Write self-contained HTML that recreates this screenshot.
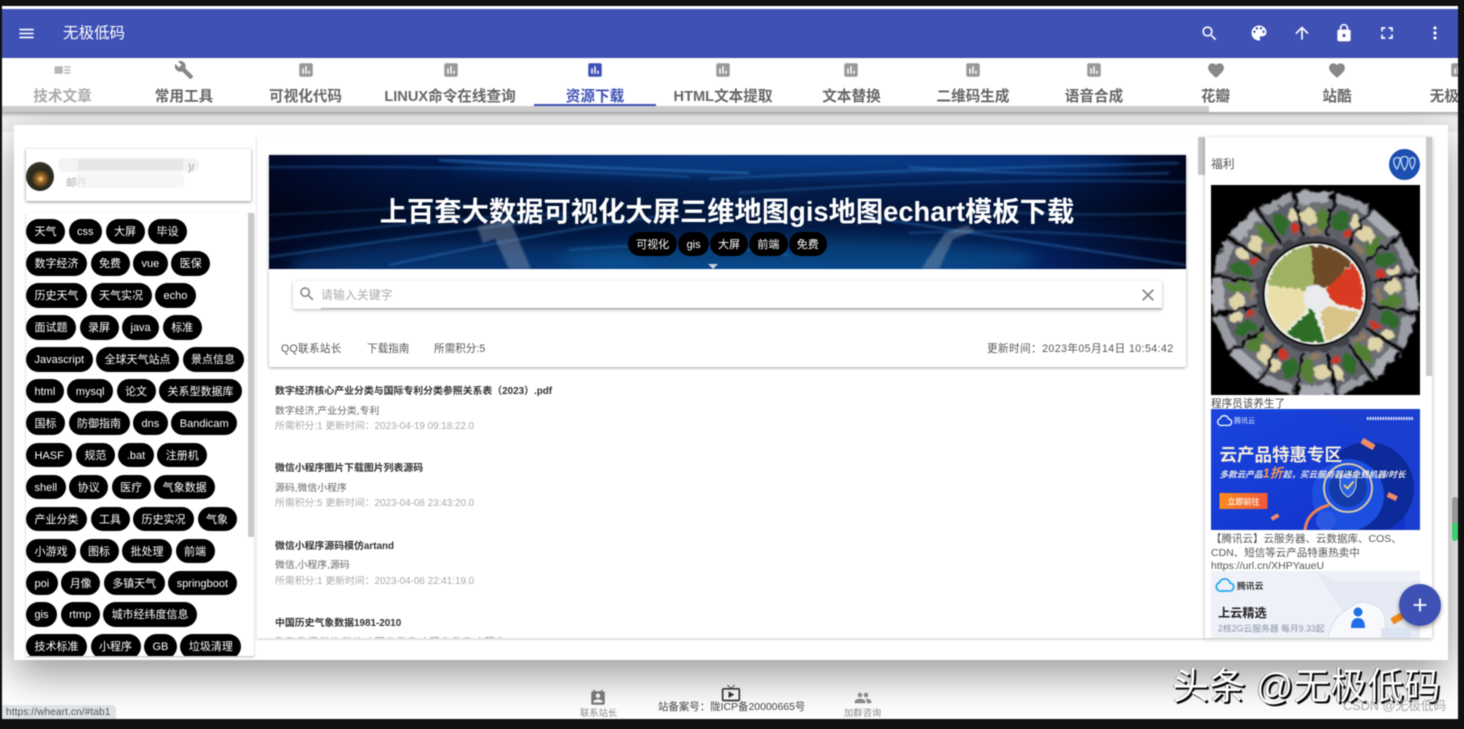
<!DOCTYPE html>
<html lang="zh"><head><meta charset="utf-8"><title>无极低码</title>
<style>
html,body{margin:0;padding:0;width:1464px;height:729px;overflow:hidden;background:#111}
*{box-sizing:border-box}
#root{position:absolute;left:0;top:0;width:1464px;height:729px;overflow:hidden;background:#fff;filter:blur(.45px);font-family:"Liberation Sans","Noto Sans CJK SC",sans-serif;color:#333}
.a{position:absolute;white-space:nowrap}
svg{display:block}
.hi{position:absolute;top:23px;width:20px;height:20px;fill:#fff}
.tab{position:absolute;top:88.5px;transform:translateX(-50%);font-size:14.6px;font-weight:bold;color:#666;line-height:17px;white-space:nowrap}
.ti{position:absolute;top:61px;width:18px;height:18px;fill:#999;transform:translateX(-50%)}
.row{position:absolute;left:26px;display:flex;gap:3.5px}
.c{height:24.4px;line-height:26px;border-radius:13px;background:#000;color:#fff;font-size:11px;padding:0 8.5px;white-space:nowrap;display:block}
.t1{position:absolute;left:275px;font-size:9.9px;font-weight:bold;color:#333;white-space:nowrap;line-height:14px}
.t2{position:absolute;left:275px;font-size:9.9px;color:#666;white-space:nowrap;line-height:13px}
.t3{position:absolute;left:275px;font-size:9.85px;color:#aaa;white-space:nowrap;line-height:13px}
.info{position:absolute;top:342px;font-size:10.6px;color:#555;white-space:nowrap;line-height:14px}
</style></head><body>
<div id="root">

<!-- page shade -->
<div class="a" style="left:0;top:112px;width:1464px;height:20px;background:#f2f2f2"></div>

<!-- large card -->
<div class="a" style="left:14px;top:125px;width:1434px;height:535px;background:#fff;box-shadow:0 14px 40px rgba(0,0,0,.42)"></div>

<!-- header -->
<div class="a" style="left:0;top:9px;width:1464px;height:48.5px;background:#3f51b5"></div>
<svg class="hi" style="left:16.500px;top:23.500px;width:19px;height:19px" viewBox="0 0 24 24"><path d="M3 18h18v-2H3v2zm0-5h18v-2H3v2zm0-7v2h18V6H3z"/></svg>
<div class="a" style="left:63px;top:24px;font-size:15.5px;line-height:19px;color:#fff">无极低码</div>
<svg class="hi" style="left:1199.500px;top:23.500px;width:19px;height:19px" viewBox="0 0 24 24"><path d="M15.500 14h-.79l-.28-.27C15.410 12.590 16 11.110 16 9.500 16 5.910 13.090 3 9.500 3S3 5.910 3 9.500 5.910 16 9.500 16c1.610 0 3.090-.59 4.230-1.570l.27.28v.79l5 4.990L20.490 19l-4.990-5zm-6 0C7.010 14 5 11.990 5 9.500S7.010 5 9.500 5 14 7.010 14 9.500 11.990 14 9.500 14z"/></svg>
<svg class="hi" style="left:1249px" viewBox="0 0 24 24"><path d="M12 3c-4.970 0-9 4.030-9 9s4.030 9 9 9c.83 0 1.500-.67 1.500-1.500 0-.39-.15-.74-.39-1.010-.23-.26-.38-.61-.38-.99 0-.83.67-1.500 1.500-1.500H16c2.760 0 5-2.240 5-5 0-4.420-4.030-8-9-8zm-5.500 9c-.83 0-1.500-.67-1.500-1.500S5.670 9 6.500 9 8 9.670 8 10.500 7.330 12 6.500 12zm3-4C8.670 8 8 7.330 8 6.500S8.670 5 9.500 5s1.500.67 1.500 1.500S10.330 8 9.500 8zm5 0c-.83 0-1.500-.67-1.500-1.500S13.670 5 14.500 5s1.500.67 1.500 1.500S15.330 8 14.500 8zm3 4c-.83 0-1.500-.67-1.500-1.500S16.670 9 17.500 9s1.500.67 1.500 1.500-.67 1.500-1.500 1.500z"/></svg>
<svg class="hi" style="left:1292px" viewBox="0 0 24 24"><path d="M4 12l1.410 1.410L11 7.830V20h2V7.830l5.580 5.590L20 12l-8-8-8 8z"/></svg>
<svg class="hi" style="left:1334px" viewBox="0 0 24 24"><path d="M18 8h-1V6c0-2.760-2.240-5-5-5S7 3.240 7 6v2H6c-1.100 0-2 .9-2 2v10c0 1.100.9 2 2 2h12c1.100 0 2-.9 2-2V10c0-1.100-.9-2-2-2zm-6 9c-1.100 0-2-.9-2-2s.9-2 2-2 2 .9 2 2-.9 2-2 2zm3.100-9H8.900V6c0-1.710 1.390-3.100 3.100-3.100 1.710 0 3.100 1.390 3.100 3.100v2z"/></svg>
<svg class="hi" style="left:1377px" viewBox="0 0 24 24"><path d="M7 14H5v5h5v-2H7v-3zm-2-4h2V7h3V5H5v5zm12 7h-3v2h5v-5h-2v3zM14 5v2h3v3h2V5h-5z"/></svg>
<svg class="hi" style="left:1425px" viewBox="0 0 24 24"><path d="M12 8c1.100 0 2-.9 2-2s-.9-2-2-2-2 .9-2 2 .9 2 2 2zm0 2c-1.100 0-2 .9-2 2s.9 2 2 2 2-.9 2-2-.9-2-2-2zm0 6c-1.100 0-2 .9-2 2s.9 2 2 2 2-.9 2-2-.9-2-2-2z"/></svg>

<!-- tabs -->
<div class="a" style="left:0;top:58px;width:1464px;height:54px;background:#fff;box-shadow:0 2px 4px rgba(0,0,0,.35)"></div>
<div class="a" style="left:0;top:106px;width:1209px;height:6px;background:#cbcbcb"></div>

<svg class="ti" style="left:62px;fill:#b5b5b5" viewBox="0 0 24 24"><path d="M2 7h11v10H2zM15 7h8v2h-8zM15 11h8v2h-8zM15 15h8v2h-8z"/></svg>
<svg class="ti" style="left:184px;width:20px;height:20px;top:60px;fill:#888" viewBox="0 0 24 24"><path d="M22.700 19l-9.100-9.100c.9-2.300.4-5-1.500-6.900-2-2-5-2.400-7.400-1.300L9 6 6 9 1.600 4.700C.4 7.100.9 10.100 2.900 12.100c1.900 1.900 4.600 2.400 6.900 1.500l9.100 9.100c.4.4 1 .4 1.400 0l2.300-2.300c.5-.4.5-1.100.1-1.400z"/></svg>
<svg class="ti" style="left:305.500px" viewBox="0 0 24 24"><path d="M19 3H5c-1.100 0-2 .9-2 2v14c0 1.100.9 2 2 2h14c1.100 0 2-.9 2-2V5c0-1.100-.9-2-2-2zM9 17H7v-7h2v7zm4 0h-2V7h2v10zm4 0h-2v-4h2v4z"/></svg>
<svg class="ti" style="left:450.500px" viewBox="0 0 24 24"><path d="M19 3H5c-1.100 0-2 .9-2 2v14c0 1.100.9 2 2 2h14c1.100 0 2-.9 2-2V5c0-1.100-.9-2-2-2zM9 17H7v-7h2v7zm4 0h-2V7h2v10zm4 0h-2v-4h2v4z"/></svg>
<svg class="ti" style="left:595px;fill:#3f51b5" viewBox="0 0 24 24"><path d="M19 3H5c-1.100 0-2 .9-2 2v14c0 1.100.9 2 2 2h14c1.100 0 2-.9 2-2V5c0-1.100-.9-2-2-2zM9 17H7v-7h2v7zm4 0h-2V7h2v10zm4 0h-2v-4h2v4z"/></svg>
<svg class="ti" style="left:723px" viewBox="0 0 24 24"><path d="M19 3H5c-1.100 0-2 .9-2 2v14c0 1.100.9 2 2 2h14c1.100 0 2-.9 2-2V5c0-1.100-.9-2-2-2zM9 17H7v-7h2v7zm4 0h-2V7h2v10zm4 0h-2v-4h2v4z"/></svg>
<svg class="ti" style="left:851px" viewBox="0 0 24 24"><path d="M19 3H5c-1.100 0-2 .9-2 2v14c0 1.100.9 2 2 2h14c1.100 0 2-.9 2-2V5c0-1.100-.9-2-2-2zM9 17H7v-7h2v7zm4 0h-2V7h2v10zm4 0h-2v-4h2v4z"/></svg>
<svg class="ti" style="left:973px" viewBox="0 0 24 24"><path d="M19 3H5c-1.100 0-2 .9-2 2v14c0 1.100.9 2 2 2h14c1.100 0 2-.9 2-2V5c0-1.100-.9-2-2-2zM9 17H7v-7h2v7zm4 0h-2V7h2v10zm4 0h-2v-4h2v4z"/></svg>
<svg class="ti" style="left:1094px" viewBox="0 0 24 24"><path d="M19 3H5c-1.100 0-2 .9-2 2v14c0 1.100.9 2 2 2h14c1.100 0 2-.9 2-2V5c0-1.100-.9-2-2-2zM9 17H7v-7h2v7zm4 0h-2V7h2v10zm4 0h-2v-4h2v4z"/></svg>
<svg class="ti" style="left:1215.500px;width:19px;height:19px;fill:#888" viewBox="0 0 24 24"><path d="M12 21.350l-1.450-1.320C5.400 15.360 2 12.280 2 8.500 2 5.420 4.420 3 7.500 3c1.740 0 3.410.81 4.500 2.090C13.090 3.810 14.760 3 16.500 3 19.580 3 22 5.420 22 8.500c0 3.780-3.400 6.860-8.550 11.540L12 21.350z"/></svg>
<svg class="ti" style="left:1337px;width:19px;height:19px;fill:#888" viewBox="0 0 24 24"><path d="M12 21.350l-1.450-1.320C5.400 15.360 2 12.280 2 8.500 2 5.420 4.420 3 7.500 3c1.740 0 3.410.81 4.500 2.090C13.090 3.810 14.760 3 16.500 3 19.580 3 22 5.420 22 8.500c0 3.780-3.400 6.860-8.550 11.540L12 21.350z"/></svg>
<svg class="ti" style="left:1458px" viewBox="0 0 24 24"><path d="M19 3H5c-1.100 0-2 .9-2 2v14c0 1.100.9 2 2 2h14c1.100 0 2-.9 2-2V5c0-1.100-.9-2-2-2zM9 17H7v-7h2v7zm4 0h-2V7h2v10zm4 0h-2v-4h2v4z"/></svg>

<div class="tab" style="left:62.500px;color:#aaa">技术文章</div>
<div class="tab" style="left:184px">常用工具</div>
<div class="tab" style="left:305.500px">可视化代码</div>
<div class="tab" style="left:450px">LINUX命令在线查询</div>
<div class="tab" style="left:595px;color:#3f51b5">资源下载</div>
<div class="tab" style="left:723px">HTML文本提取</div>
<div class="tab" style="left:851.500px">文本替换</div>
<div class="tab" style="left:973px">二维码生成</div>
<div class="tab" style="left:1094px">语音合成</div>
<div class="tab" style="left:1215.500px">花瓣</div>
<div class="tab" style="left:1337px">站酷</div>
<div class="tab" style="left:1459px">无极低码</div>
<div class="a" style="left:534px;top:104px;width:122px;height:2px;background:#3f51b5"></div>

<!-- user card -->
<div class="a" style="left:26px;top:149px;width:225px;height:52px;background:#fff;box-shadow:0 1px 3px rgba(0,0,0,.45)"></div>
<div class="a" style="left:26px;top:162px;width:28px;height:29px;border-radius:50%;background:radial-gradient(circle at 52% 58%,#f0d898 0,#a86a28 16%,#2a281a 42%,#3c3a2a 82%,#8a8a80 100%)"></div>
<div class="a" style="left:66px;top:176px;font-size:10.5px;color:#aaa;line-height:14px">邮件</div>
<div class="a" style="left:58px;top:158px;width:141px;height:14px;background:#f3f3f3;border-radius:6px"></div>
<div class="a" style="left:78px;top:159px;width:105px;height:11px;background:#e6e6e6"></div>
<div class="a" style="left:76px;top:173px;width:108px;height:15px;background:rgba(242,242,242,.72);border-radius:4px"></div>
<div class="a" style="left:188px;top:163px;font-size:10px;color:#999;line-height:12px">)/</div>

<!-- tags panel -->
<div class="a" style="left:26px;top:213px;width:228px;height:443px;background:#fff;box-shadow:0 1px 2px rgba(0,0,0,.3);overflow:hidden"></div>
<div class="a" style="left:248px;top:213px;width:6px;height:324px;background:#c9c9c9"></div>
<div class="a" style="left:0;top:0;width:254px;height:656px;overflow:hidden">
<div class="row" style="top:219.300px"><span class="c">天气</span><span class="c">css</span><span class="c">大屏</span><span class="c">毕设</span></div>
<div class="row" style="top:251.300px"><span class="c">数字经济</span><span class="c">免费</span><span class="c">vue</span><span class="c">医保</span></div>
<div class="row" style="top:283.200px"><span class="c">历史天气</span><span class="c">天气实况</span><span class="c">echo</span></div>
<div class="row" style="top:315.200px"><span class="c">面试题</span><span class="c">录屏</span><span class="c">java</span><span class="c">标准</span></div>
<div class="row" style="top:347.200px"><span class="c">Javascript</span><span class="c">全球天气站点</span><span class="c">景点信息</span></div>
<div class="row" style="top:379.100px"><span class="c">html</span><span class="c">mysql</span><span class="c">论文</span><span class="c">关系型数据库</span></div>
<div class="row" style="top:411px"><span class="c">国标</span><span class="c">防御指南</span><span class="c">dns</span><span class="c">Bandicam</span></div>
<div class="row" style="top:442.800px"><span class="c">HASF</span><span class="c">规范</span><span class="c">.bat</span><span class="c">注册机</span></div>
<div class="row" style="top:474.800px"><span class="c">shell</span><span class="c">协议</span><span class="c">医疗</span><span class="c">气象数据</span></div>
<div class="row" style="top:506.700px"><span class="c">产业分类</span><span class="c">工具</span><span class="c">历史实况</span><span class="c">气象</span></div>
<div class="row" style="top:538.600px"><span class="c">小游戏</span><span class="c">图标</span><span class="c">批处理</span><span class="c">前端</span></div>
<div class="row" style="top:570.500px"><span class="c">poi</span><span class="c">月像</span><span class="c">多镇天气</span><span class="c">springboot</span></div>
<div class="row" style="top:602.400px"><span class="c">gis</span><span class="c">rtmp</span><span class="c">城市经纬度信息</span></div>
<div class="row" style="top:634.400px"><span class="c">技术标准</span><span class="c">小程序</span><span class="c">GB</span><span class="c">垃圾清理</span></div>
</div>

<!-- main panel -->
<div class="a" style="left:257px;top:137px;width:948px;height:501px;background:#fff;box-shadow:0 1px 2px rgba(0,0,0,.25)"></div>
<div class="a" style="left:269px;top:155px;width:917px;height:212px;background:#fff;box-shadow:0 1px 3px rgba(0,0,0,.35);border-radius:2px"></div>

<!-- banner -->
<svg class="a" style="left:269px;top:155px" width="917" height="114" viewBox="0 0 917 114">
<defs>
<linearGradient id="bg" x1="0" x2="1" y1="0" y2="0"><stop offset="0" stop-color="#010a2d"/><stop offset=".15" stop-color="#021a50"/><stop offset=".5" stop-color="#062c70"/><stop offset=".85" stop-color="#04246a"/><stop offset="1" stop-color="#000722"/></linearGradient>
<linearGradient id="vg" x1="0" x2="0" y1="0" y2="1"><stop offset="0" stop-color="#000" stop-opacity=".05"/><stop offset=".5" stop-color="#000" stop-opacity=".48"/><stop offset="1" stop-color="#000" stop-opacity=".05"/></linearGradient>
<filter id="b1" x="-5%" y="-20%" width="110%" height="140%"><feGaussianBlur stdDeviation="1"/></filter>
<filter id="b2" x="-5%" y="-20%" width="110%" height="140%"><feGaussianBlur stdDeviation="7"/></filter>
</defs>
<rect width="917" height="114" fill="url(#bg)"/>
<ellipse cx="200" cy="110" rx="180" ry="24" fill="#0c5aa8" opacity=".45" filter="url(#b2)"/>
<ellipse cx="530" cy="104" rx="240" ry="22" fill="#0f6fb8" opacity=".5" filter="url(#b2)"/>
<ellipse cx="520" cy="10" rx="340" ry="12" fill="#1056b4" opacity=".55" filter="url(#b2)"/>
<rect width="917" height="114" fill="url(#vg)"/>
<g fill="none" stroke="#3a8fdc" stroke-opacity=".65" filter="url(#b1)">
<path d="M0 12Q200 10 420 22" stroke-width="1"/><path d="M170 5Q300 12 480 18" stroke-width="1.800"/><path d="M440 24Q600 16 910 8" stroke-width="1.200"/><path d="M470 38Q700 22 917 27" stroke-width="1"/><path d="M640 12Q780 22 900 18" stroke-width="1.200"/>
<path d="M0 85Q180 62 300 58" stroke-width="1"/><path d="M0 102Q170 78 300 62" stroke-width="1.200"/><path d="M120 110Q280 76 400 60" stroke-width="1.300"/><path d="M600 62Q780 90 917 110" stroke-width="1.300"/><path d="M640 78Q780 72 917 88" stroke-width="1"/><path d="M700 55Q800 62 917 58" stroke-width="1"/><path d="M0 60Q100 55 200 50" stroke-width=".8"/><path d="M300 95Q420 84 520 100" stroke-width="1"/>
</g>
<g filter="url(#b1)" opacity=".38"><path d="M208 72L240 62L262 114H240L226 84L214 88Z" fill="#9aa6b8"/><path d="M652 114L676 78L698 70L706 76L684 84L670 114Z" fill="#9aa6b8"/></g>
<path d="M439 109h10l-5 5z" fill="#c8d2dc"/>
<text x="458" y="66" text-anchor="middle" font-family="Liberation Sans,Noto Sans CJK SC,sans-serif" font-size="27.300" font-weight="bold" fill="#fff">上百套大数据可视化大屏三维地图gis地图echart模板下载</text>
</svg>
<div class="a" style="left:628px;top:231.500px;display:flex;gap:1px">
<span class="c" style="padding:0 8.200px">可视化</span><span class="c" style="padding:0 8.200px">gis</span><span class="c" style="padding:0 8.200px">大屏</span><span class="c" style="padding:0 8.200px">前端</span><span class="c" style="padding:0 8.200px">免费</span>
</div>

<!-- search -->
<div class="a" style="left:293px;top:281px;width:869px;height:28px;background:#fff;box-shadow:0 1px 3px rgba(0,0,0,.3);border-radius:2px"></div>
<svg class="a" style="left:298px;top:285px;fill:#808080" width="18" height="18" viewBox="0 0 24 24"><path d="M15.500 14h-.79l-.28-.27C15.410 12.590 16 11.110 16 9.500 16 5.910 13.090 3 9.500 3S3 5.910 3 9.500 5.910 16 9.500 16c1.610 0 3.090-.59 4.230-1.570l.27.28v.79l5 4.990L20.490 19l-4.990-5zm-6 0C7.010 14 5 11.990 5 9.500S7.010 5 9.500 5 14 7.010 14 9.500 11.990 14 9.500 14z"/></svg>
<div class="a" style="left:321px;top:287px;font-size:11.8px;line-height:16px;color:#aaa;letter-spacing:.15px">请输入关键字</div>
<div class="a" style="left:321px;top:307.500px;width:841px;height:1px;background:#aaa"></div>
<svg class="a" style="left:1138px;top:285px;fill:#808080" width="20" height="20" viewBox="0 0 24 24"><path d="M19 6.410L17.590 5 12 10.590 6.410 5 5 6.410 10.590 12 5 17.590 6.410 19 12 13.410 17.590 19 19 17.590 13.410 12z"/></svg>

<div class="info" style="left:281px;letter-spacing:.3px">QQ联系站长</div>
<div class="info" style="left:367px">下载指南</div>
<div class="info" style="left:434px">所需积分:5</div>
<div class="info" style="left:987px;letter-spacing:.42px">更新时间：2023年05月14日 10:54:42</div>

<!-- list -->
<div class="t1" style="top:385px">数字经济核心产业分类与国际专利分类参照关系表（2023）.pdf</div>
<div class="t2" style="top:404.500px">数字经济,产业分类,专利</div>
<div class="t3" style="top:419.500px">所需积分:1 更新时间：2023-04-19 09:18:22.0</div>
<div class="t1" style="top:462.300px">微信小程序图片下载图片列表源码</div>
<div class="t2" style="top:482px">源码,微信小程序</div>
<div class="t3" style="top:497px">所需积分:5 更新时间：2023-04-08 23:43:20.0</div>
<div class="t1" style="top:539.800px">微信小程序源码模仿artand</div>
<div class="t2" style="top:559px">微信,小程序,源码</div>
<div class="t3" style="top:574.500px">所需积分:1 更新时间：2023-04-06 22:41:19.0</div>
<div class="t1" style="top:616.800px">中国历史气象数据1981-2010</div>
<div class="a" style="left:275px;top:636.500px;width:240px;height:2px;overflow:hidden"><div style="font-size:9.9px;color:#777;line-height:13px;white-space:nowrap;margin-top:-1px">数字,数据,微信,微信,小程序,数字,小程序,数字,小程序</div></div>
<div class="a" style="left:257px;top:638px;width:948px;height:2px;background:#e4e4e4"></div>

<div class="a" style="left:1198px;top:137px;width:7px;height:38px;background:#c6c6c6"></div>

<!-- right panel -->
<div class="a" style="left:1205px;top:137px;width:227px;height:501px;background:#fff;box-shadow:0 1px 4px rgba(0,0,0,.3)"></div>
<div class="a" style="left:1426px;top:137px;width:6px;height:239px;background:#cacaca"></div>
<div class="a" style="left:1211px;top:156px;font-size:11.8px;line-height:16px;color:#555">福利</div>
<svg class="a" style="left:1389px;top:149px" width="31" height="31" viewBox="0 0 31 31">
<circle cx="15.500" cy="15.500" r="15.500" fill="#1d4fb0"/>
<g fill="none" stroke="#bcd7ef" stroke-width="1.300"><path d="M5 10c3-2 5-2 6 0 0 5-2 8-3 10-2-2-4-6-3-10z"/><path d="M12 9c2-2 5-2 7 0 0 6-2 10-3.500 12C14 19 12 15 12 9z"/><path d="M21 10c1-2 3-2 5 0 0 4-1 8-3 10-1-2-3-5-2-10z"/></g>
</svg>

<!-- food image -->
<svg class="a" style="left:1211px;top:185px" width="209" height="210" viewBox="0 0 209 210">
<defs>
<g id="sa">
<path d="M-20-102L18-104L10-56L-10-56Z" fill="#6d6e76"/>
<path d="M-18-101L16-103L14-92L-15-90Z" fill="#a9abb2"/>
<ellipse cx="-7" cy="-78" rx="8" ry="8" fill="#ded4a8"/>
<ellipse cx="7" cy="-76" rx="6" ry="12" fill="#527f36"/>
<ellipse cx="0" cy="-63" rx="7" ry="3" fill="#8f7a62"/>
</g>
<g id="sb">
<path d="M-20-102L18-104L10-56L-10-56Z" fill="#5f6068"/>
<path d="M-18-101L16-103L14-94L-15-92Z" fill="#9a9ca3"/>
<ellipse cx="-5" cy="-78" rx="7" ry="11" fill="#2f6a2b"/>
<ellipse cx="9" cy="-82" rx="5" ry="7" fill="#e0d6ac"/>
<ellipse cx="7" cy="-68" rx="4.500" ry="5" fill="#c93626"/>
</g>
<filter id="fb" x="-5%" y="-5%" width="110%" height="110%">
<feTurbulence type="fractalNoise" baseFrequency=".13" numOctaves="2" seed="4" result="n"/>
<feDisplacementMap in="SourceGraphic" in2="n" scale="9" result="d"/>
<feGaussianBlur in="d" stdDeviation=".7"/>
</filter>
<filter id="fp" x="-5%" y="-5%" width="110%" height="110%">
<feTurbulence type="fractalNoise" baseFrequency=".22" numOctaves="2" seed="8" result="n"/>
<feDisplacementMap in="SourceGraphic" in2="n" scale="6" result="d"/>
<feGaussianBlur in="d" stdDeviation=".5"/>
</filter>
</defs>
<rect width="209" height="210" fill="#000"/>
<g transform="translate(104,109)">
<g filter="url(#fb)">
<circle r="60" fill="#4c4d55"/>
<use href="#sa" transform="rotate(0)"/><use href="#sb" transform="rotate(22.500)"/><use href="#sa" transform="rotate(45)"/><use href="#sb" transform="rotate(67.500)"/><use href="#sa" transform="rotate(90)"/><use href="#sb" transform="rotate(112.500)"/><use href="#sa" transform="rotate(135)"/><use href="#sb" transform="rotate(157.500)"/><use href="#sa" transform="rotate(180)"/><use href="#sb" transform="rotate(202.500)"/><use href="#sa" transform="rotate(225)"/><use href="#sb" transform="rotate(247.500)"/><use href="#sa" transform="rotate(270)"/><use href="#sb" transform="rotate(292.500)"/><use href="#sa" transform="rotate(315)"/><use href="#sb" transform="rotate(337.500)"/>
<circle r="58" fill="#3f4048"/>
</g>
<circle r="52.500" fill="#151515"/>
<circle r="50.500" fill="#ecece7"/>
<g filter="url(#fp)">
<path d="M-1 -4L-4 -48A48 48 0 0 0 -47 -9L-8 -2Z" fill="#9fb264"/>
<path d="M-1 -4L-4 -48A48 48 0 0 1 36 -32L16 -8Z" fill="#6e4b26"/>
<path d="M8 -2L37 -31A48 48 0 0 1 45 16L22 10Z" fill="#d93a20"/>
<path d="M12 12L44 18A48 48 0 0 1 11 47L6 18Z" fill="#d8c489"/>
<path d="M-3 14L9 47A48 48 0 0 1 -28 39Z" fill="#2f6d28"/>
<path d="M-8 -4L-47 -8A48 48 0 0 0 -30 38L-7 14Z" fill="#eadfaa"/>
<circle cx="1" cy="4" r="13" fill="#e9ebef"/>
</g>
</g>
</svg>
<div class="a" style="left:1211px;top:397px;font-size:10.6px;line-height:14px;color:#444">程序员该养生了</div>

<!-- tencent ad -->
<svg class="a" style="left:1211px;top:409px" width="209" height="121" viewBox="0 0 209 121" font-family="Liberation Sans,Noto Sans CJK SC,sans-serif">
<defs><linearGradient id="ad" x1="0" x2="1" y1="0" y2="1"><stop offset="0" stop-color="#1a45de"/><stop offset="1" stop-color="#1232c8"/></linearGradient>
<linearGradient id="bt"><stop offset="0" stop-color="#fb8c1e"/><stop offset="1" stop-color="#f2573a"/></linearGradient></defs>
<rect width="209" height="121" fill="url(#ad)"/>
<path d="M100 0Q190 30 195 121H209V0Z" fill="#1a3fd0"/>
<circle cx="157" cy="79" r="46" fill="#0d2a9a"/>
<circle cx="137" cy="86" r="36" fill="#1c4fe0"/>
<circle cx="137" cy="79" r="24" fill="none" stroke="#d7c8a8" stroke-width="2"/>
<circle cx="137" cy="79" r="19" fill="#123aa8"/>
<path d="M129 68L137 65L145 68V77Q143 85 137 88Q131 85 129 77Z" fill="#2560e8" stroke="#d9cfc0"/>
<path d="M133 76l3.500 3.500 6-7" stroke="#f4d36b" stroke-width="1.800" fill="none"/>
<path d="M94 121Q96 102 118 96" stroke="#f08050" stroke-width="3" fill="none"/>
<circle cx="115" cy="112" r="10" fill="#2a58e0"/>
<rect x="150" y="32" width="14" height="6" rx="1" fill="#f08b64" transform="rotate(30 157 35)"/>
<rect x="176" y="85" width="10" height="5" fill="#f08b64" transform="rotate(25 181 88)"/>
<rect x="60" y="106" width="8" height="4" fill="#f08b64" transform="rotate(-30 64 108)"/>
<path transform="translate(2.400,.4) scale(.8)" d="M11 20H18.500a4 4 0 0 0 .5-8a5.500 5.500 0 0 0-10.500-.5a4.300 4.300 0 0 0 2.500 8.500z" fill="none" stroke="#fff" stroke-width="1.600"/>
<text x="23" y="14" font-size="7" fill="#e8eeff">腾讯云</text>
<path d="M156 9.500H202" stroke="#e4e9ff" stroke-width="3" stroke-dasharray="1.600 1"/>
<text x="8.500" y="52" font-size="17.500" font-weight="bold" fill="#f5eddb">云产品特惠专区</text>
<text x="8.500" y="68.500" font-size="8.600" font-weight="bold" font-style="italic" fill="#e9e6e4">多款云产品<tspan fill="#f59a60" font-size="13">1折</tspan>起，买云服务器送免费机器/时长</text>
<rect x="8.500" y="84" width="48" height="16" fill="url(#bt)"/>
<text x="32.500" y="95.500" font-size="8" font-weight="bold" fill="#fbe4cf" text-anchor="middle">立即前往</text>
</svg>
<div class="a" style="left:1211px;top:533px;width:212px;font-size:10.5px;line-height:13.5px;color:#555;white-space:normal">【腾讯云】云服务器、云数据库、COS、<br>CDN、短信等云产品特惠热卖中<br>https://url.cn/XHPYaueU</div>

<!-- third ad -->
<svg class="a" style="left:1211px;top:571px" width="209" height="67" viewBox="0 0 209 67" font-family="Liberation Sans,Noto Sans CJK SC,sans-serif">
<rect width="209" height="67" fill="#eef1f8"/>
<path d="M105 0L125 10H209V67H150Z" fill="#e6eaf4"/>
<path d="M11 20H18.500a4 4 0 0 0 .5-8a5.500 5.500 0 0 0-10.500-.5a4.300 4.300 0 0 0 2.500 8.500z" fill="none" stroke="#25a9ee" stroke-width="1.800"/>
<text x="26" y="18" font-size="8.800" font-weight="bold" fill="#333">腾讯云</text>
<text x="7" y="46" font-size="12.200" font-weight="bold" fill="#222">上云精选</text>
<text x="7" y="60.500" font-size="8.800" fill="#8b93a8">2核2G云服务器 每月9.33起</text>
<path d="M117 67Q120 46 140 36Q150 27 162 34Q174 36 174 50L176 67Z" fill="#f7f9fd" stroke="#d5def0"/>
<circle cx="147" cy="41" r="4.500" fill="#1e6fe6"/>
<path d="M140 57Q140 47 147 47Q154 47 154 57Z" fill="#1e6fe6"/>
<rect x="180" y="44" width="12" height="7" fill="#f08a20" transform="rotate(-30 186 47)"/>
<rect x="170" y="57" width="30" height="10" fill="#dce3f2"/>
</svg>

<!-- FAB -->
<div class="a" style="left:1399px;top:584px;width:42px;height:42px;border-radius:50%;background:#3f51b5;box-shadow:0 2px 5px rgba(0,0,0,.4)"></div>
<svg class="a" style="left:1409px;top:594px;fill:#fff" width="22" height="22" viewBox="0 0 24 24"><path d="M19 13h-6v6h-2v-6H5v-2h6V5h2v6h6v2z"/></svg>

<!-- footer -->
<svg class="a" style="left:589px;top:689px;fill:#777" width="18" height="18" viewBox="0 0 24 24"><path d="M19 3h-1V1h-2v2H8V1H6v2H5c-1.110 0-2 .9-2 2v14c0 1.100.89 2 2 2h14c1.100 0 2-.9 2-2V5c0-1.100-.9-2-2-2zm-7 3c1.660 0 3 1.340 3 3s-1.340 3-3 3-3-1.340-3-3 1.340-3 3-3zm6 12H6v-1c0-2 4-3.100 6-3.100s6 1.100 6 3.100v1z"/></svg>
<div class="a" style="left:580px;top:707px;font-size:9.3px;line-height:13px;color:#888">联系站长</div>
<svg class="a" style="left:721px;top:683px;fill:#333" width="20" height="20" viewBox="0 0 24 24"><path d="M21 6h-7.590l3.290-3.290L16 2l-4 4-4-4-.71.71L10.590 6H3c-1.100 0-2 .89-2 2v12c0 1.100.9 2 2 2h18c1.100 0 2-.89 2-2V8c0-1.110-.9-2-2-2zm0 14H3V8h18v12zM9 10v8l7-4z"/></svg>
<div class="a" style="left:658px;top:701px;font-size:10.45px;line-height:14px;color:#444">站备案号：陇ICP备20000665号</div>
<svg class="a" style="left:854px;top:689px;fill:#888" width="18" height="18" viewBox="0 0 24 24"><path d="M16 11c1.660 0 2.990-1.340 2.990-3S17.660 5 16 5c-1.660 0-3 1.340-3 3s1.340 3 3 3zm-8 0c1.660 0 2.990-1.340 2.990-3S9.660 5 8 5C6.340 5 5 6.340 5 8s1.340 3 3 3zm0 2c-2.330 0-7 1.170-7 3.500V19h14v-2.500c0-2.330-4.670-3.500-7-3.500zm8 0c-.29 0-.62.02-.97.05 1.160.84 1.970 1.970 1.970 3.450V19h6v-2.500c0-2.330-4.670-3.500-7-3.500z"/></svg>
<div class="a" style="left:844px;top:707px;font-size:9.3px;line-height:13px;color:#888">加群咨询</div>

<!-- page scrollbar -->
<div class="a" style="left:1452px;top:497px;width:6px;height:44px;border-radius:3px;background:#999"></div>
<div class="a" style="left:1452px;top:523px;width:6px;height:18px;border-radius:0 0 3px 3px;background:#3ed070"></div>

<!-- status url -->
<div class="a" style="left:2px;top:705px;width:114px;height:14px;background:#dee1e6;border-radius:0 4px 0 0;font-size:10.1px;line-height:16px;color:#555;padding-left:4px;letter-spacing:.1px;overflow:hidden">https://wheart.cn/#tab1</div>

<!-- watermarks -->
<div class="a" style="left:1172px;top:665px;font-size:36.8px;line-height:44px;color:#fff;text-shadow:1.500px 1.500px 0 #000,2px 2px 0 #222,-.5px 0 0 #333">头条 @无极低码</div>
<div class="a" style="left:1343px;top:699px;font-size:12.7px;line-height:14px;color:#999;opacity:.85">CSDN @无极低码</div>

<!-- outer frame -->
<div class="a" style="left:0;top:0;width:1464px;height:6px;background:#111"></div>
<div class="a" style="left:0;top:0;width:2px;height:729px;background:#111"></div>
<div class="a" style="left:1458px;top:0;width:6px;height:729px;background:#111"></div>
<div class="a" style="left:0;top:719px;width:1464px;height:10px;background:#111"></div>
</div>
</body></html>
